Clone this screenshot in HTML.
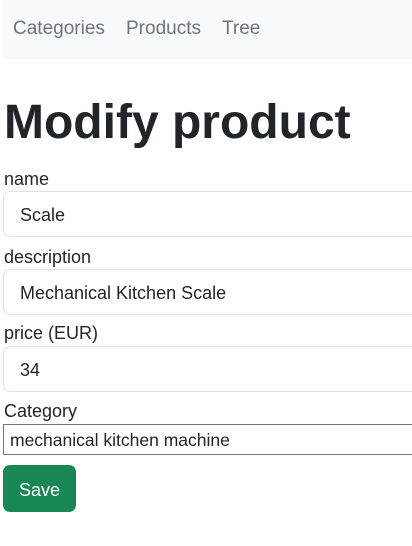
<!DOCTYPE html>
<html><head><style>
body{margin:0;width:412px;height:546px;overflow:hidden;background:#fff;font-family:"Liberation Sans",sans-serif;color:#212529;position:relative}
.a{position:absolute;white-space:nowrap}
.nav{left:3px;top:0;width:420px;height:59px;background:#f8f9fa}
.nl{top:18px;font-size:19px;color:#6c757d}
h1{position:absolute;left:4px;top:90px;margin:0;font-size:48px;font-weight:bold;line-height:66px}
.lb{left:4px;font-size:18px;line-height:22px}
.in{left:3px;width:440px;height:44px;border:1px solid #dee2e6;border-radius:7px;box-sizing:content-box}
.in span{position:absolute;left:16px;top:13px;font-size:18px}
.sel{left:3px;top:424px;width:440px;height:29px;border:1px solid #767676;font-size:17.5px}
.sel span{position:absolute;left:6px;top:5px}
.btn{left:3px;top:465px;width:73px;height:47px;background:#198754;border-radius:7px;color:#fff;font-size:18px;text-align:center;line-height:50px}
</style></head><body>
<div class="a nav"></div>
<div class="a nl" style="left:13px">Categories</div>
<div class="a nl" style="left:126px">Products</div>
<div class="a nl" style="left:222px">Tree</div>
<h1>Modify product</h1>
<div class="a lb" style="top:168px">name</div>
<div class="a in" style="top:191px"><span>Scale</span></div>
<div class="a lb" style="top:246px">description</div>
<div class="a in" style="top:269px"><span>Mechanical Kitchen Scale</span></div>
<div class="a lb" style="top:322px">price (EUR)</div>
<div class="a in" style="top:346px"><span>34</span></div>
<div class="a lb" style="top:400px">Category</div>
<div class="a sel"><span>mechanical kitchen machine</span></div>
<div class="a btn">Save</div>
</body></html>
